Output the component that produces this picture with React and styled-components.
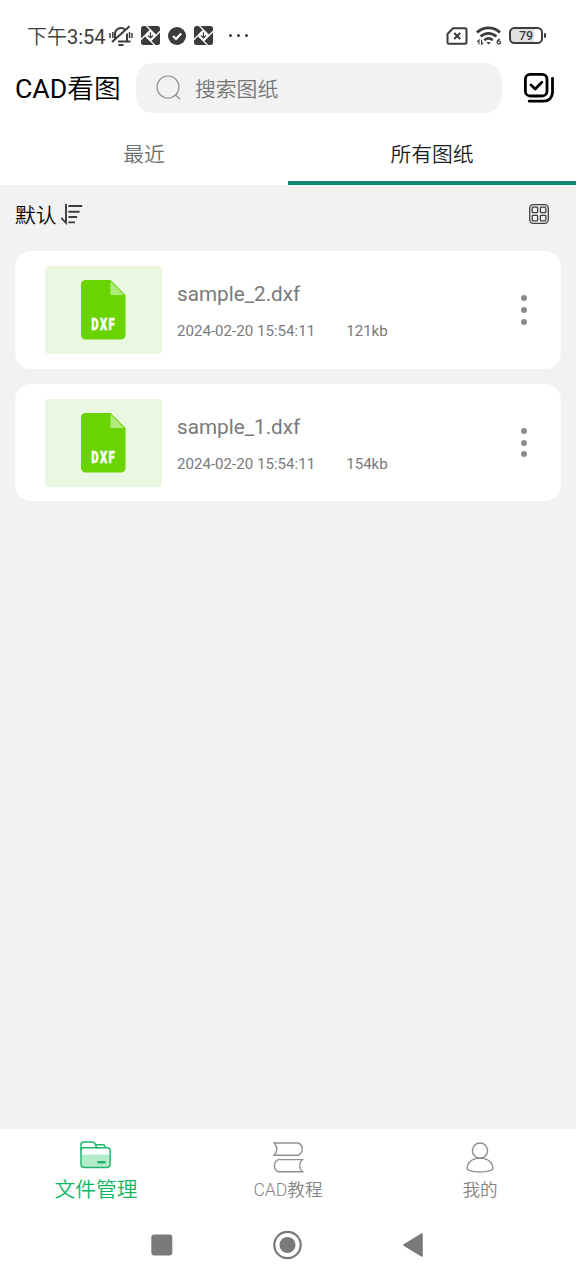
import React, { useState } from "react";
import styled, { createGlobalStyle } from "styled-components";

const files = [
  { name: "sample_2.dxf", date: "2024-02-20 15:54:11", size: "121kb" },
  { name: "sample_1.dxf", date: "2024-02-20 15:54:11", size: "154kb" },
];

//icons
const BellOff = () => (
  <svg width="24" height="22" viewBox="0 0 24 22" fill="none" stroke="#3c3c3c" strokeWidth="2">
    <path d="M6 15V9a6 6 0 0 1 9.5-4.900M18 8.500V16.500M9 16.500h12.500M3 17L20.500 1.200" />
    <path d="M9.500 20h5" strokeWidth="2" />
    <path d="M1 8v5M3.800 7v6M20.500 7v6M23 8v5" strokeWidth="1.500" />
  </svg>
);

const Pinwheel = () => (
  <svg width="19" height="19" viewBox="0 0 19 19">
    <rect width="19" height="19" rx="2.500" fill="#3c3c3c" />
    <path d="M15 9.500L4.500-1M9.500 15L20 4.500M4 9.500L14.500 20M9.500 4L-1 14.500" stroke="#fff" strokeWidth="1.300" />
    <path d="M9.500 4l5.500 5.500-5.500 5.500L4 9.500z" fill="#fff" />
    <path d="M9.500 6.200v5.600M7 9.500l2.500 2.500L12 9.500" fill="none" stroke="#3c3c3c" strokeWidth="1.200" />
  </svg>
);

const CheckBadge = () => (
  <svg width="18" height="18" viewBox="0 0 18 18">
    <circle cx="9" cy="9" r="9" fill="#3c3c3c" />
    <path d="M5 9l3 3 5.200-5.400" fill="none" stroke="#fff" strokeWidth="2.200" />
  </svg>
);

const Sim = () => (
  <svg width="22" height="18" viewBox="0 0 22 18" fill="none" stroke="#3c3c3c" strokeWidth="2">
    <path d="M7 1.200h12.200c.8 0 1.300.5 1.300 1.300v13c0 .8-.5 1.300-1.300 1.300H2.800c-.8 0-1.300-.5-1.300-1.300V7z" strokeLinejoin="round" />
    <path d="M8.200 6l6 6M14.200 6l-6 6" />
  </svg>
);

const Wifi = () => (
  <svg width="26" height="20" viewBox="0 0 26 20" fill="none" stroke="#3c3c3c">
    <path d="M1 6.600c6.500-6.200 16.500-6.200 23 0" strokeWidth="2.800" />
    <path d="M4.600 10.600c4.500-4.200 11.300-4.200 15.800 0" strokeWidth="2.700" />
    <path d="M8.300 14.200c2.500-2.200 5.900-2.200 8.400 0" strokeWidth="2.500" />
    <path d="M10.200 16h4.600l-2.300 2.500z" fill="#3c3c3c" stroke="none" />
    <path d="M3 18.500v-4.500L1.200 15.800M5.600 13.700v4.700l1.600-1.800" strokeWidth="1.100" />
    <path d="M24 13.200c-1.800.4-2.800 1.800-2.800 3.400a1.700 1.500 0 1 0 .2-.9" strokeWidth="1.300" />
  </svg>
);

const SearchIcon = () => (
  <svg width="26" height="26" viewBox="0 0 26 26" fill="none" stroke="#929292" strokeWidth="1.200">
    <circle cx="12" cy="12" r="11" />
    <path d="M19.700 20l4 4" strokeLinecap="round" />
  </svg>
);

const MultiSelect = () => (
  <svg width="30" height="30" viewBox="0 0 30 30" fill="none" stroke="#000" strokeWidth="2.800" strokeLinecap="round">
    <rect x="1.400" y="1.400" width="21.600" height="21.600" rx="4.800" />
    <path d="M7 12l4.200 4 6.600-6.800" strokeLinejoin="round" />
    <path d="M28.500 5.400v14.200a8.600 8.600 0 0 1-8.600 8.600H5.200" />
  </svg>
);

const SortIcon = () => (
  <svg width="23" height="22" viewBox="0 0 23 22" fill="none" stroke="#3d3d3d" strokeWidth="1.900">
    <path d="M.2 14.800l4.800 5V1M7.400 3H21.200M7.400 8.700h11.100M7.400 14h8.700M7.400 19.400h6.600" />
  </svg>
);

const GridIcon = () => (
  <svg width="20" height="20" viewBox="0 0 20 20" fill="none" stroke="#3f3f3f">
    <rect x=".7" y=".7" width="18.600" height="18.600" rx="3.500" strokeWidth="1.300" />
    <g strokeWidth="1.300">
      <rect x="3.200" y="3.200" width="5.400" height="5.400" rx=".5" />
      <rect x="11.400" y="3.200" width="5.400" height="5.400" rx=".5" />
      <rect x="3.200" y="11.400" width="5.400" height="5.400" rx=".5" />
      <rect x="11.400" y="11.400" width="5.400" height="5.400" rx=".5" />
    </g>
  </svg>
);

const FolderIcon = () => (
  <svg width="32" height="32" viewBox="0 0 32 32" fill="none" stroke="#1fb56c" strokeWidth="1.500">
    <path d="M2 13.500h27.500v10a3 3 0 0 1-3 3H5a3 3 0 0 1-3-3z" fill="#b4ebcd" stroke="none" />
    <path d="M1 9.500V3.800A2.800 2.800 0 0 1 3.800 1h8.400c1.500 0 2.700.8 3.200 2.200l.7 2.200c.3.900 1 1.400 1.800 1.400h9.200a3 3 0 0 1 3 3v13.700a3 3 0 0 1-3 3H4a3 3 0 0 1-3-3z" />
    <path d="M1 9c0-1.300.8-2.200 2-2.200h15M15.600 3.700h7.200c1.200 0 2 .7 2.200 1.700l.4 1.400" />
    <path d="M18.500 21.300h6" strokeWidth="2.600" strokeLinecap="round" />
  </svg>
);

const BooksIcon = () => (
  <svg width="31" height="31" viewBox="0 0 31 31" fill="none" stroke="#909090" strokeWidth="1.400">
    <path d="M1 1h24.500c5 2.500 5 9.700 0 12.200H1c3.800-3.400 3.800-8.800 0-12.200z" />
    <path d="M29.500 17.600H5.200c-5 2.500-5 9.700 0 12.200h24.300c-3.800-3.400-3.800-8.800 0-12.200z" />
  </svg>
);

const UserIcon = () => (
  <svg width="28" height="31" viewBox="0 0 28 31" fill="none" stroke="#909090" strokeWidth="1.400">
    <circle cx="14" cy="8.600" r="7.600" />
    <path d="M9.500 16.700C4.800 18 1.500 21.500 1 26c0 1.200.6 1.700 1.600 2.100 6.900 2.500 15.900 2.500 22.800 0 1-.4 1.600-.9 1.600-2.100-.5-4.500-3.800-8-8.500-9.300-2.800-.8-6.200-.8-9 0z" />
  </svg>
);

const tabs = ["最近", "所有图纸"];

const navItems = [
  { label: "文件管理", icon: <FolderIcon /> },
  { label: "CAD教程", icon: <BooksIcon /> },
  { label: "我的", icon: <UserIcon /> },
];

function FileCard({ file }) {
  return (
    <Card>
      <Thumb>
        <DxfFile>
          <svg width="45" height="60" viewBox="0 0 45 60">
            <path d="M4.500 0h25L44.500 15v40a4.500 4.500 0 0 1-4.500 4.500H4.500A4.500 4.500 0 0 1 0 55V4.500A4.500 4.500 0 0 1 4.500 0z" fill="#69d402" />
            <path d="M29.500 1.500v13.500h13.500z" fill="#b2eb7d" />
          </svg>
          <DxfLabel>DXF</DxfLabel>
        </DxfFile>
      </Thumb>
      <FileInfo>
        <div className="name">{file.name}</div>
        <div className="meta">
          <span>{file.date}</span>
          <span>{file.size}</span>
        </div>
      </FileInfo>
      <MoreButton>
        <i />
        <i />
        <i />
      </MoreButton>
    </Card>
  );
}

function App() {
  const [tab, setTab] = useState(1);
  const [page, setPage] = useState(0);

  return (
    <Screen>
      <GlobalStyle />
      <StatusBar>
        <div className="time">
          下午<b>3:54</b>
        </div>
        <div className="notices">
          <BellOff />
          <Pinwheel />
          <CheckBadge />
          <Pinwheel />
        </div>
        <Ellipsis>
          <i />
          <i />
          <i />
        </Ellipsis>
        <div className="system">
          <Sim />
          <Wifi />
          <Battery>
            <div className="body">79</div>
            <div className="tip" />
          </Battery>
        </div>
      </StatusBar>

      <Header>
        <h1>
          <b>CAD</b>看图
        </h1>
        <SearchBox>
          <SearchIcon />
          <span>搜索图纸</span>
        </SearchBox>
        <MultiSelect />
      </Header>

      <Tabs>
        {tabs.map((label, i) => (
          <Tab key={label} $active={tab === i} onClick={() => setTab(i)}>
            {label}
          </Tab>
        ))}
      </Tabs>

      <Toolbar>
        <div className="sort">
          默认
          <SortIcon />
        </div>
        <GridIcon />
      </Toolbar>

      <FileList>
        {files.map((file) => (
          <FileCard key={file.name} file={file} />
        ))}
      </FileList>

      <BottomNav>
        {navItems.map((item, i) => (
          <NavItem key={item.label} $active={page === i} onClick={() => setPage(i)}>
            <div className="icon">{item.icon}</div>
            <div className="label">{item.label}</div>
          </NavItem>
        ))}
      </BottomNav>

      <SystemNav>
        <svg width="22" height="22" viewBox="0 0 22 22">
          <rect x=".3" y=".5" width="21" height="21" rx="3" fill="#7a7a7a" />
        </svg>
        <svg width="30" height="30" viewBox="0 0 30 30">
          <circle cx="14.500" cy="15" r="13.200" fill="none" stroke="#7a7a7a" strokeWidth="2.200" />
          <circle cx="14.500" cy="15" r="8" fill="#7a7a7a" />
        </svg>
        <svg width="22" height="26" viewBox="0 0 22 26">
          <path d="M2 13L20 2v22z" fill="#7a7a7a" stroke="#7a7a7a" strokeWidth="1.500" strokeLinejoin="round" />
        </svg>
      </SystemNav>
    </Screen>
  );
}

export default App;

const GlobalStyle = createGlobalStyle`
  * {
    box-sizing: border-box;
  }

  body {
    margin: 0;
    font-family: Roboto, "Noto Sans CJK SC", sans-serif;
    font-weight: 350;
  }

  /* latin text next to the thinner chinese glyphs */
  b {
    font-weight: 400;
  }

  svg {
    display: block;
    flex-shrink: 0;
  }
`;

const Screen = styled.div`
  height: 1280px;
  display: flex;
  flex-direction: column;
  background-color: #f2f2f2;
`;

const StatusBar = styled.div`
  height: 63px;
  padding: 9px 30px 0 27px;
  display: flex;
  align-items: center;
  background-color: white;
  color: #3c3c3c;

  .time {
    width: 82px;
    margin-top: -1px;
    font-size: 20px;
    white-space: nowrap;
  }

  .notices {
    display: flex;
    align-items: center;
    gap: 8px;
    margin-top: -1px;
  }

  .system {
    margin-left: auto;
    margin-top: -1px;
    display: flex;
    align-items: center;
    gap: 7.5px;
  }
`;

const Ellipsis = styled.div`
  display: flex;
  gap: 4.5px;
  margin-left: 15.5px;
  margin-top: -1px;

  i {
    width: 3.5px;
    height: 3.5px;
    border-radius: 50%;
    background-color: #3c3c3c;
  }
`;

const Battery = styled.div`
  display: flex;
  align-items: center;
  gap: 1px;

  .body {
    width: 34px;
    height: 17px;
    display: flex;
    align-items: center;
    justify-content: center;
    border: 2px solid #3c3c3c;
    border-radius: 5.5px;
    background: linear-gradient(to right, #e2e2e2 78%, white 78%);
    font-size: 12.5px;
    font-weight: 500;
  }

  .tip {
    width: 2px;
    height: 5px;
    border-radius: 1px;
    background-color: #3c3c3c;
  }
`;

const Header = styled.div`
  height: 50px;
  padding: 0 22px 0 15px;
  display: flex;
  align-items: center;
  background-color: white;

  h1 {
    width: 121px;
    margin: -4px 0 0;
    font-size: 26.7px;
    font-weight: 350;
    white-space: nowrap;
    color: black;
  }
`;

const SearchBox = styled.div`
  width: 366px;
  height: 50px;
  margin-right: 22px;
  padding-left: 20px;
  display: flex;
  align-items: center;
  gap: 13px;
  border-radius: 17px;
  background-color: #f2f2f2;
  font-size: 20.8px;
  color: #757575;

  span {
    margin-top: -1px;
  }
`;

const Tabs = styled.div`
  height: 72px;
  display: flex;
  background-color: white;
`;

const Tab = styled.div`
  flex: 1;
  display: flex;
  align-items: center;
  justify-content: center;
  padding-top: 12px;
  border-bottom: 4px solid ${(props) => (props.$active ? "#138573" : "white")};
  font-size: 20.8px;
  color: ${(props) => (props.$active ? "#1c1c1c" : "#6e6e6e")};
  cursor: pointer;
`;

const Toolbar = styled.div`
  height: 66px;
  padding: 0 27px 8px 15px;
  display: flex;
  align-items: center;
  justify-content: space-between;

  .sort {
    display: flex;
    align-items: center;
    gap: 4px;
    font-size: 20.8px;
    color: black;
  }
`;

const FileList = styled.div`
  flex: 1;
  padding: 0 15px;
  display: flex;
  flex-direction: column;
  gap: 15px;
`;

const Card = styled.div`
  height: 117.7px;
  padding: 0 30px;
  display: flex;
  align-items: center;
  border-radius: 16px;
  background-color: white;
`;

const Thumb = styled.div`
  width: 117px;
  height: 88px;
  display: flex;
  align-items: center;
  justify-content: center;
  border-radius: 4px;
  background-color: #ebf8e1;
`;

const DxfFile = styled.div`
  position: relative;
`;

const DxfLabel = styled.div`
  position: absolute;
  left: 0;
  right: 0;
  bottom: 8px;
  text-align: center;
  font-size: 16px;
  line-height: 14px;
  font-weight: 900;
  letter-spacing: 2px;
  text-indent: 0.5px;
  transform: scaleX(0.7);
  -webkit-text-stroke: 0.4px white;
  color: white;
`;

const FileInfo = styled.div`
  flex: 1;
  padding-left: 15px;
  padding-top: 2px;
  font-weight: 400;
  color: #7a7a7a;

  .name {
    font-size: 20.7px;
    line-height: 28px;
    margin-bottom: 13px;
  }

  .meta {
    display: flex;
    gap: 31px;
    font-size: 15.1px;
    line-height: 20px;
  }
`;

const MoreButton = styled.div`
  width: 14px;
  display: flex;
  flex-direction: column;
  align-items: center;
  gap: 5.8px;
  cursor: pointer;

  i {
    width: 6px;
    height: 6px;
    border-radius: 50%;
    background-color: #8c8c8c;
  }
`;

const BottomNav = styled.div`
  height: 83px;
  display: flex;
  background-color: white;
`;

const NavItem = styled.div`
  flex: 1;
  display: flex;
  flex-direction: column;
  align-items: center;
  padding-top: 11px;
  color: ${(props) => (props.$active ? "#0fb560" : "#858585")};
  cursor: pointer;

  .icon {
    height: 34px;
    display: flex;
    align-items: center;
  }

  .label {
    font-size: ${(props) => (props.$active ? "20.8px" : "17.6px")};
    line-height: 32px;
  }
`;

const SystemNav = styled.div`
  height: 68px;
  padding: 0 152px 2px 151px;
  display: flex;
  align-items: center;
  justify-content: space-between;
  background-color: white;
`;
